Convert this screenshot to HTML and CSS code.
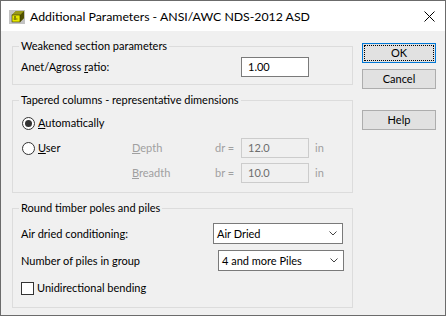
FILE: index.html
```html
<!DOCTYPE html>
<html>
<head>
<meta charset="utf-8">
<link rel="stylesheet" href="styles.css">
</head>
<body>
<div class="window">
  <div class="titlebar">
    <svg class="app-icon" width="16" height="14" viewBox="0 0 16 14">
      <rect x="0" y="0" width="16" height="14" fill="#c3c3c3"/>
      <polygon points="3,5 7,1 15,1 15,8 11,12 3,12" fill="#6b6b00"/>
      <polygon points="11,5 15,1 15,8 11,12" fill="#505000"/>
      <polygon points="3,5 7,1 15,1 11,5" fill="#9a9a18"/>
      <rect x="3" y="5" width="8" height="7" fill="#e8e800" stroke="#333300" stroke-width="0.6"/>
      <path d="M5 7 h2 M4.5 9 h4 M6 6 v4" stroke="#555500" stroke-width="0.8"/>
    </svg>
    <span class="title">Additional Parameters - ANSI/AWC NDS-2012 ASD</span>
    <svg class="close" width="11" height="11" viewBox="0 0 11 11">
      <path d="M0.5 0.5 L10.5 10.5 M10.5 0.5 L0.5 10.5" stroke="#000" stroke-width="1"/>
    </svg>
  </div>
  <div class="body">
    <div class="groups">
      <fieldset class="group g1">
        <legend>Weakened section parameters</legend>
        <div class="ratio-row">
          <span class="ratio-label">Anet/Agross <u>r</u>atio:</span>
          <div class="edit">1.00</div>
        </div>
      </fieldset>
      <fieldset class="group g2">
        <legend>Tapered columns - representative dimensions</legend>
        <div class="taper-grid">
          <div class="opt"><span class="radio checked"></span><span><u>A</u>utomatically</span></div>
          <div></div><div></div><div></div><div></div>
          <div class="opt"><span class="radio"></span><span><u>U</u>ser</span></div>
          <div class="dis"><u>D</u>epth</div>
          <div class="dis">dr =</div>
          <div class="edit disabled">12.0</div>
          <div class="dis unit">in</div>
          <div></div>
          <div class="dis"><u>B</u>readth</div>
          <div class="dis">br =</div>
          <div class="edit disabled">10.0</div>
          <div class="dis unit">in</div>
        </div>
      </fieldset>
      <fieldset class="group g3">
        <legend>Round timber poles and piles</legend>
        <div class="pole-row">
          <span class="lbl-air">Air dried conditioning:</span>
          <div class="combo combo-air"><span>Air Dried</span><svg class="chev" width="8" height="5" viewBox="0 0 8 5"><path d="M0.5 0.5 L4 4 L7.5 0.5" fill="none" stroke="#444" stroke-width="1"/></svg></div>
        </div>
        <div class="pole-row">
          <span class="lbl-piles">Number of piles in group</span>
          <div class="combo combo-piles"><span>4 and more Piles</span><svg class="chev" width="8" height="5" viewBox="0 0 8 5"><path d="M0.5 0.5 L4 4 L7.5 0.5" fill="none" stroke="#444" stroke-width="1"/></svg></div>
        </div>
        <div class="check-row">
          <span class="checkbox"></span><span>Unidirectional bending</span>
        </div>
      </fieldset>
    </div>
    <div class="buttons">
      <div class="btn default"><span class="focus">OK</span></div>
      <div class="btn cancel">Cancel</div>
      <div class="btn help">Help</div>
    </div>
  </div>
</div>
</body>
</html>
```
FILE: styles.css
```css
* { box-sizing: border-box; }
html, body { margin: 0; padding: 0; background: #f0f0f0; }
body {
  font-family: Lato, "Noto Sans", sans-serif;
  font-size: 11px;
  line-height: 16px;
  color: #000;
}
.window {
  width: 446px;
  height: 316px;
  border: 1px solid #6b6b6b;
  background: #f0f0f0;
  display: flex;
  flex-direction: column;
}
.titlebar {
  height: 30px;
  background: #fff;
  display: flex;
  align-items: center;
  padding-left: 8px;
}
.app-icon { flex: none; margin-top: 1px; }
.title { margin-left: 5px; margin-top: 2px; font-size: 12.3px; }
.close { margin-left: auto; margin-right: 10px; margin-top: 1px; }

.body {
  display: flex;
  padding: 7px 0 0 11px;
}
.groups {
  width: 341px;
  display: flex;
  flex-direction: column;
  gap: 7px;
}
.group {
  margin: 0;
  border: 1px solid #dcdcdc;
  padding: 0 8px;
  min-width: 0;
}
.group legend {
  padding: 0 2px;
  margin-left: -2px;
  line-height: 16px;
}
.g1 { padding-top: 3px; padding-bottom: 7px; }
.g2 { padding-top: 5px; padding-bottom: 9px; }
.g3 { padding-top: 7px; padding-bottom: 9px; }

.ratio-row { display: flex; align-items: center; height: 20px; }
.ratio-label { width: 220px; flex: none; }

.edit {
  width: 68px;
  height: 20px;
  border: 1px solid #7a7a7a;
  background: #fff;
  padding-left: 6px;
  line-height: 18px;
}
.edit.disabled {
  border-color: #cccccc;
  background: #f0f0f0;
  color: #6d6d6d;
}

.taper-grid {
  display: grid;
  grid-template-columns: 111px 83px 26px 68px auto;
  grid-template-rows: 20px 20px 20px;
  row-gap: 5px;
  align-items: center;
}
.opt { display: flex; align-items: center; gap: 3px; padding-left: 1px; }
.radio {
  width: 13px; height: 13px;
  border: 1px solid #333;
  border-radius: 50%;
  background: #fff;
  display: flex; align-items: center; justify-content: center;
  flex: none;
}
.radio.checked::after {
  content: "";
  width: 7px; height: 7px;
  border-radius: 50%;
  background: #333;
}
.dis { color: #a0a0a0; }
.unit { padding-left: 6px; }

.pole-row { display: flex; align-items: center; height: 21px; margin-bottom: 6px; }
.pole-row + .pole-row { margin-bottom: 7px; }
.lbl-air { width: 192px; flex: none; }
.lbl-piles { width: 197px; flex: none; }
.combo {
  height: 21px;
  border: 1px solid #7a7a7a;
  background: #fff;
  display: flex;
  align-items: center;
  padding-left: 3px;
  padding-right: 5px;
}
.combo-air { width: 130px; }
.combo-piles { width: 127px; }
.chev { margin-left: auto; }

.check-row { display: flex; align-items: center; gap: 3px; height: 20px; }
.checkbox {
  width: 13px; height: 13px;
  border: 1px solid #333;
  background: #fff;
  flex: none;
}

.buttons {
  margin-left: 9px;
  width: 74px;
  padding-top: 5px;
  display: flex;
  flex-direction: column;
}
.btn {
  height: 20px;
  border: 1px solid #adadad;
  background: #e1e1e1;
  display: flex;
  align-items: center;
  justify-content: center;
}
.btn.default {
  border-color: #0078d7;
  padding: 1px;
}
.btn.default .focus {
  width: 100%; height: 100%;
  border: 1px dotted #000;
  display: flex; align-items: center; justify-content: center;
}
.btn.cancel { margin-top: 6px; }
.btn.help { margin-top: 21px; }
```
